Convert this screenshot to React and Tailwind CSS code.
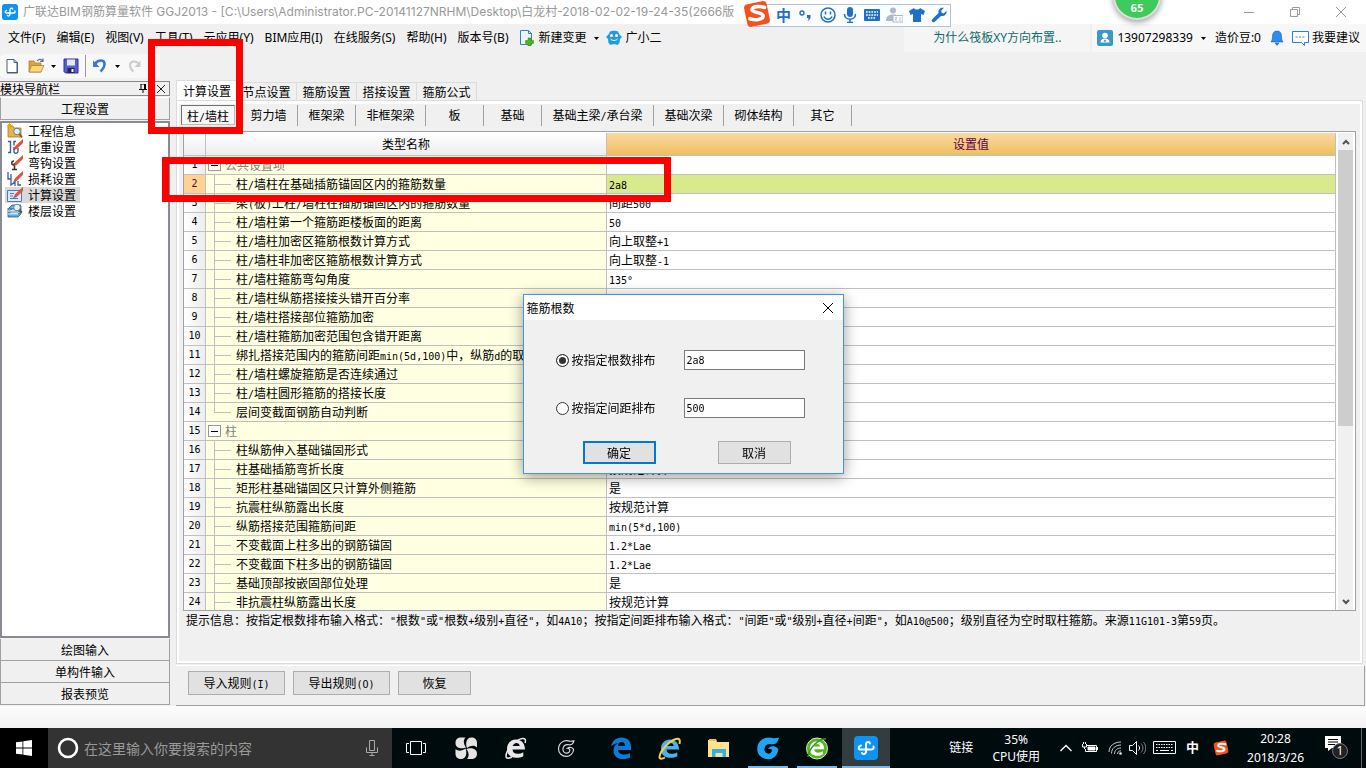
import React, { useState } from "react";

const menus = ["文件(F)", "编辑(E)", "视图(V)", "工具(T)", "云应用(Y)", "BIM应用(I)", "在线服务(S)", "帮助(H)", "版本号(B)"];

const subTabs = [
  ["剪力墙", "w-[58px]"],
  ["框架梁", "w-[58px]"],
  ["非框架梁", "w-[70px]"],
  ["板", "w-[58px]"],
  ["基础", "w-[58px]"],
  ["基础主梁/承台梁", "w-[112px]"],
  ["基础次梁", "w-[70px]"],
  ["砌体结构", "w-[70px]"],
  ["其它", "w-[58px]"],
];

const rows = [
  { group: true, name: "公共设置项", value: "" },
  { name: "柱/墙柱在基础插筋锚固区内的箍筋数量", value: "2a8", selected: true },
  { name: "梁(板)上柱/墙柱在插筋锚固区内的箍筋数量", value: "间距500" },
  { name: "柱/墙柱第一个箍筋距楼板面的距离", value: "50" },
  { name: "柱/墙柱加密区箍筋根数计算方式", value: "向上取整+1" },
  { name: "柱/墙柱非加密区箍筋根数计算方式", value: "向上取整-1" },
  { name: "柱/墙柱箍筋弯勾角度", value: "135°" },
  { name: "柱/墙柱纵筋搭接接头错开百分率", value: "" },
  { name: "柱/墙柱搭接部位箍筋加密", value: "" },
  { name: "柱/墙柱箍筋加密范围包含错开距离", value: "" },
  { name: "绑扎搭接范围内的箍筋间距min(5d,100)中，纵筋d的取", value: "" },
  { name: "柱/墙柱螺旋箍筋是否连续通过", value: "" },
  { name: "柱/墙柱圆形箍筋的搭接长度", value: "" },
  { name: "层间变截面钢筋自动判断", value: "", last: true },
  { group: true, name: "柱", value: "" },
  { name: "柱纵筋伸入基础锚固形式", value: "" },
  { name: "柱基础插筋弯折长度", value: "按规范计算" },
  { name: "矩形柱基础锚固区只计算外侧箍筋", value: "是" },
  { name: "抗震柱纵筋露出长度", value: "按规范计算" },
  { name: "纵筋搭接范围箍筋间距", value: "min(5*d,100)" },
  { name: "不变截面上柱多出的钢筋锚固", value: "1.2*Lae" },
  { name: "不变截面下柱多出的钢筋锚固", value: "1.2*Lae" },
  { name: "基础顶部按嵌固部位处理", value: "是" },
  { name: "非抗震柱纵筋露出长度", value: "按规范计算" },
];

/* Sets Latin runs in a half-width face, so that two letters take the room of one ideograph. */
function Mix({ children }) {
  return String(children)
    .split(/([\x20-\x7e°]+)/)
    .filter(Boolean)
    .map((part, i) =>
      /^[\x20-\x7e°]/.test(part) ? (
        <span key={i} className="whitespace-pre font-['DejaVu_Sans_Mono',monospace] text-[10px] leading-none">{part}</span>
      ) : (
        part
      )
    );
}

function Caret() {
  return (
    <svg className="h-[3px] w-[5px] shrink-0" viewBox="0 0 5 3"><path d="M0 0h5L2.500 3z" fill="#000" /></svg>
  );
}

function LogoShape() {
  return (
    <g>
      <rect width="24" height="24" rx="4" fill="#0c93f4" />
      <path d="M16 7.500C15.500 5.500 12 5.500 12 8.500V15.500C12 18.500 8.500 18.500 8 17M7 9.500C4 10.500 4 13.500 7 13.500H17.500C19.500 13.500 20 12 19.500 10.500" fill="none" stroke="#fff" strokeWidth="2" strokeLinecap="round" />
    </g>
  );
}

function SogouLogo({ className }) {
  return (
    <svg className={className} viewBox="0 0 28 28">
      <rect x="2.500" y="2.500" width="23" height="23" rx="4" fill="#f4511e" transform="rotate(-12 14 14)" />
      <path d="M21.500 7.500c-5-1.800-12-1.200-12.500 2-.4 3.500 11.500 2.500 11.200 6.600-.3 3.700-8 4.400-13.200 2.600" fill="none" stroke="#fff" strokeWidth="3.600" strokeLinecap="round" />
    </svg>
  );
}

function TitleBar() {
  return (
    <header className="flex h-6 shrink-0 items-center bg-white pl-[2px]">
      <svg className="h-4 w-4 shrink-0" viewBox="0 0 24 24"><LogoShape /></svg>
      <h1 className="ml-[5px] flex-1 overflow-hidden whitespace-nowrap font-[Inter,'Noto_Sans_CJK_SC',sans-serif] text-[12px] leading-6 text-[#999]">
        广联达BIM钢筋算量软件 GGJ2013 - [C:\Users\Administrator.PC-20141127NRHM\Desktop\白龙村-2018-02-02-19-24-35(2666版
      </h1>
      <button aria-label="最小化" className="flex h-5 w-[46px] items-center justify-center">
        <svg className="h-3 w-3" viewBox="0 0 12 12"><path d="M1 6.500h10" stroke="#999" /></svg>
      </button>
      <button aria-label="还原" className="flex h-5 w-[46px] items-center justify-center">
        <svg className="h-3 w-3" viewBox="0 0 12 12" fill="none" stroke="#999"><path d="M1.500 3.500h7v7h-7zM3.500 3.500v-2h7v7h-2" /></svg>
      </button>
      <button aria-label="关闭" className="mr-[2px] flex h-5 w-[46px] items-center justify-center">
        <svg className="h-3 w-3" viewBox="0 0 12 12"><path d="M1 1l10 10M11 1L1 11" stroke="#999" /></svg>
      </button>
    </header>
  );
}

function MenuBar() {
  return (
    <nav className="flex h-7 shrink-0 items-center whitespace-nowrap pl-2 font-['Noto_Sans','Noto_Sans_CJK_SC',sans-serif] text-[12px] leading-5">
      <div className="flex gap-[11px]">
        {menus.map((m) => <button key={m}>{m}</button>)}
      </div>
      <button className="ml-[10px] flex items-center gap-1">
        <svg className="h-4 w-4" viewBox="0 0 16 16">
          <path d="M1.500.5h8l3 3v11h-11z" fill="#eaf5fd" stroke="#3a7fb5" />
          <path d="M9.500.5v3h3" fill="none" stroke="#3a7fb5" />
          <path d="M9 8h3v2.500h2.500v3H12V16H9v-2.500H6.500v-3H9z" fill="#4cb515" stroke="#2f8a0c" strokeWidth=".5" />
        </svg>
        新建变更
      </button>
      <button aria-label="更多变更" className="ml-[7px] flex h-5 w-2 items-center"><Caret /></button>
      <button className="ml-1 flex items-center gap-1">
        <svg className="h-4 w-4" viewBox="0 0 16 16">
          <path d="M4 1.500c2-1 6-1 8 0l1.500 3 2.500 2.500-2 2-.5 4-2 2-2-.8h-3l-2 .8-2-2L2 9 0 7l2.500-2.500z" fill="#1f9be0" />
          <circle cx="5.500" cy="5.500" r="1.500" fill="#fff" /><circle cx="10.500" cy="5.500" r="1.500" fill="#fff" />
          <path d="M4.500 9c2 2 5 2 7 0" fill="none" stroke="#fff" />
        </svg>
        广小二
      </button>
      <div className="flex-1" />
      <a href="#help" className="flex h-full w-[186px] items-center justify-center bg-[#f5f5f5] text-[#0d6b6b]">为什么筏板XY方向布置..</a>
      <div className="ml-[2px] flex h-full items-center bg-[#f7f7f7] pl-[5px] pr-[6px]">
        <svg className="h-4 w-4" viewBox="0 0 16 16">
          <rect width="16" height="16" rx="2" fill="#3f97c6" />
          <circle cx="8" cy="5.500" r="2.800" fill="#fff" /><path d="M3.500 12.500c0-3 2-4 4.500-4s4.500 1 4.500 4z" fill="#fff" /><path d="M8 9.500l-1.500 1.500L8 12l1.500-1z" fill="#3f97c6" />
        </svg>
        <button className="ml-1 flex items-center gap-2">13907298339<Caret /></button>
        <span className="ml-[9px]">造价豆:0</span>
        <svg className="ml-[9px] h-4 w-[14px]" viewBox="0 0 14 16"><path d="M7 1c3 0 4.500 2 4.500 5 0 3 .5 4.500 1.500 6H1c1-1.500 1.500-3 1.500-6C2.500 3 4 1 7 1zM5 13h4l-2 2.500z" fill="#2b8cf5" stroke="#174e8f" strokeWidth=".5" /></svg>
        <button className="ml-2 flex items-center gap-[3px]">
          <svg className="h-4 w-[17px]" viewBox="0 0 17 16"><path d="M.5 1.500h16v11h-4v3l-3-3h-9z" fill="#fff" stroke="#2b7fd8" /><path d="M3.500 7h10" stroke="#2b7fd8" strokeDasharray="2 1.500" /></svg>
          我要建议
        </button>
      </div>
    </nav>
  );
}

function Toolbar() {
  return (
    <div className="flex h-7 shrink-0 items-center">
      <div className="flex h-6 w-[160px] items-center rounded-sm bg-[#f8f8f8] pl-1">
        <button aria-label="新建" className="w-4">
          <svg className="h-4 w-4" viewBox="0 0 16 16"><path d="M3 1.500h7l3 3v10H3z" fill="#fff" stroke="#4a5f78" /><path d="M10 1.500v3h3M13.500 4v11H3" fill="none" stroke="#4a5f78" /></svg>
        </button>
        <button aria-label="打开" className="ml-2 w-[17px]">
          <svg className="h-4 w-[17px]" viewBox="0 0 17 16"><path d="M1 3h5l1 2h6v9H1z" fill="#dba53c" stroke="#a87820" strokeWidth=".7" /><path d="M3.500 7.500H16L13 14H1z" fill="#fbd77f" stroke="#a87820" strokeWidth=".7" /><path d="M9 3c2-2.500 4-2 6 0m0-2.500V3.500h-3" fill="none" stroke="#55748f" strokeWidth="1.200" /></svg>
        </button>
        <button aria-label="打开列表" className="ml-[6px] w-2"><Caret /></button>
        <button aria-label="保存" className="ml-1 w-4">
          <svg className="h-4 w-4" viewBox="0 0 16 16"><path d="M1 1h14v14H2.500L1 13.500z" fill="#5560d0" stroke="#33338c" /><path d="M4 1.500h8v6H4z" fill="#e6e8fa" /><path d="M4.500 10h7v5h-7z" fill="#25255c" /><path d="M8.500 11h2v3h-2z" fill="#fff" /></svg>
        </button>
        <span className="ml-[6px] h-[22px] w-px bg-[#999]" />
        <button aria-label="撤销" className="ml-[6px] w-4">
          <svg className="h-4 w-4" viewBox="0 0 16 16"><path d="M3 6C6 1.500 12 1.500 12.500 5.500c.3 3-1.500 5.500-4 8" fill="none" stroke="#3b78cf" strokeWidth="2.600" /><path d="M1 2.500v6.500h6.500z" fill="#3b78cf" /></svg>
        </button>
        <button aria-label="撤销列表" className="ml-[7px] w-2"><Caret /></button>
        <button aria-label="恢复" className="ml-1 w-4">
          <svg className="h-4 w-4" viewBox="0 0 16 16"><path d="M12 6C9 2 3 3 3 7c0 2.500 1 4.500 3.500 6.500" fill="none" stroke="#ccc" strokeWidth="2" /><path d="M13.500 2.500v6.500H7.500z" fill="#ccc" /></svg>
        </button>
      </div>
    </div>
  );
}

const pencil = <path d="M15.800.5L8.500 7l-2 4L10 9.500 16 3.500z" fill="#e8503a" stroke="#b02b15" strokeWidth=".4" />;
const navIcons = {
  info: <g><path d="M1 3h5l1 2h7v9H1z" fill="#e5b548" stroke="#a87c1e" strokeWidth=".8" /><circle cx="10" cy="8.500" r="3.300" fill="#dff0fb" stroke="#5b7d99" /><path d="M12.500 11l2.500 3.500" stroke="#8a5c20" strokeWidth="2" /><path d="M2.500 0v5M0 2.500h5M.8.8l3.400 3.400M4.200.8L.8 4.200" stroke="#f5a400" /></g>,
  weight: <g><path d="M1 2.500h2.500v11H1M9 2.500H7v4M7 8v4.500c0 2.500 4 2 4 0V9" fill="none" stroke="#3b5e95" strokeWidth="1.400" />{pencil}</g>,
  hook: <g><path d="M7.500 8v6.500M5 14.500h5M7 10c-3 0-3-4 0-4" fill="none" stroke="#333" strokeWidth="1.500" />{pencil}</g>,
  loss: <g><path d="M1 1v7h3V3M4 8v6l4-3v4M11 10v4h3" fill="none" stroke="#3b5e95" strokeWidth="1.300" />{pencil}</g>,
  calc: <g><path d="M.5 3.500h14v11H.5z" fill="#d9e8fa" stroke="#4d7cb5" /><path d="M3 6.500h4M3 9h3M3 11.500h8" stroke="#4d7cb5" />{pencil}</g>,
  floor: <g><path d="M2 5l3-3h9l-3 3zM2 8l3-2h9l-3 2zM1 11l3-2h10l-3 2zM1 5v9h10l3-3V3" fill="#5fa9dd" stroke="#1d5d94" strokeWidth=".8" /><path d="M1 8h10M1 11h10" stroke="#fff" /><circle cx="10" cy="4.500" r="3.300" fill="#e6f3fb" stroke="#6a8499" /><path d="M12.500 7l2.500 2.500" stroke="#6a4c20" strokeWidth="1.600" /></g>,
};
const navItems = [["info", "工程信息"], ["weight", "比重设置"], ["hook", "弯钩设置"], ["loss", "损耗设置"], ["calc", "计算设置"], ["floor", "楼层设置"]];

function Sidebar() {
  return (
    <aside className="mb-[1px] mr-[6px] mt-[1px] flex w-[170px] shrink-0 flex-col">
      <div className="flex h-[15px] shrink-0 items-center border border-l-0 border-[#888] pr-1 leading-[12px]">
        <span className="flex-1">模块导航栏</span>
        <button aria-label="固定" className="mr-[10px]">
          <svg className="h-[9px] w-2" viewBox="0 0 8 9"><path d="M1.500 0h5v5.500M2 0v5.500M0 5.500h8M4 5.500V9M5.500 0v5" fill="none" stroke="#000" /></svg>
        </button>
        <button aria-label="关闭导航栏"><svg className="h-2 w-2" viewBox="0 0 8 8"><path d="M0 0l8 8M8 0L0 8" stroke="#222" /></svg></button>
      </div>
      <button className="mt-[1px] h-[23px] shrink-0 border border-[#a0a0a0] border-t-white leading-5">工程设置</button>
      <ul className="my-[1px] flex-1 border-2 border-[#8a8a92] bg-white pl-[3px]">
        {navItems.map(([icon, label]) => (
          <li key={icon}>
            <button className={"flex h-4 items-center pr-1 leading-4 " + (icon === "calc" ? "bg-[#d9d9d9]" : "")}>
              <svg className="mr-[5px] ml-[2px] h-4 w-4" viewBox="0 0 16 16">{navIcons[icon]}</svg>
              {label}
            </button>
          </li>
        ))}
      </ul>
      {["绘图输入", "单构件输入", "报表预览"].map((t) => (
        <button key={t} className="h-[22px] shrink-0 border border-t-0 border-[#a0a0a0] leading-5">{t}</button>
      ))}
    </aside>
  );
}

function NameCell({ row }) {
  if (row.group) {
    return (
      <div className="flex h-[18px] items-center gap-1 overflow-hidden pl-[2px] text-[#808080]">
        <button aria-label="折叠" className="flex h-3 w-[13px] items-center justify-center border border-[#999] bg-white"><span className="h-px w-[7px] bg-black" /></button>
        <span className="leading-[18px]">{row.name}</span>
      </div>
    );
  }
  return (
    <div className="flex h-[18px] overflow-hidden pl-2">
      <span className="mr-[5px] flex w-[17px] shrink-0 flex-col">
        <span className="h-[10px] border-b border-l border-[#c0c0c0]" />
        <span className={"flex-1 border-l " + (row.last ? "border-transparent" : "border-[#c0c0c0]")} />
      </span>
      <span className="whitespace-nowrap leading-[18px]"><Mix>{row.name}</Mix></span>
    </div>
  );
}

function SettingsTable() {
  return (
    <div className="flex min-h-0 flex-1 overflow-hidden border border-[#a0a0a8] bg-white pt-px">
      <div className="min-w-0 flex-1 overflow-hidden">
        <table className="w-full table-fixed border-separate border-spacing-0">
          <colgroup><col className="w-[22px]" /><col className="w-[401px]" /><col /></colgroup>
          <thead>
            <tr className="h-[23px]">
              <th className="border-b border-r border-[#c0c0c0] bg-linear-to-b from-white to-[#ededed] p-0" />
              <th className="border-b border-r border-[#c0c0c0] bg-linear-to-b from-white to-[#ededed] p-0 font-normal leading-[22px]">类型名称</th>
              <th className="border-b border-r border-[#c0c0c0] bg-linear-to-b from-[#fad9a0] to-[#f0be5c] p-0 font-normal leading-[22px] text-[#5a0050]">设置值</th>
            </tr>
          </thead>
          <tbody>
            {rows.map((row, i) => (
              <tr key={i}>
                <td className={"border-b border-r border-[#c0c0c0] p-0 text-center " + (row.selected ? "bg-[#ffd290] text-[#5a0050]" : "bg-linear-to-r from-white to-[#ededed]")}>
                  <div className="h-[18px] overflow-hidden font-['DejaVu_Sans_Mono',monospace] text-[10px] leading-[18px]">{i + 1}</div>
                </td>
                <td className="border-b border-r border-[#c0c0c0] bg-[#ffffe1] p-0"><NameCell row={row} /></td>
                <td className={"border-b border-r border-[#c0c0c0] p-0 pl-[2px] " + (row.selected ? "bg-[#d9ea8c]" : "")}>
                  <div className="h-[18px] overflow-hidden whitespace-nowrap leading-[18px]"><Mix>{row.value}</Mix></div>
                </td>
              </tr>
            ))}
          </tbody>
        </table>
      </div>
      <div className="ml-[2px] mr-[2px] flex w-[15px] shrink-0 flex-col bg-[#f0f0f0]">
        <button aria-label="向上滚动" className="flex h-[17px] items-center justify-center"><svg className="h-[6px] w-2" viewBox="0 0 8 6"><path d="M1 5l3-3 3 3" fill="none" stroke="#505050" strokeWidth="2" /></svg></button>
        <div className="h-[276px] bg-[#cdcdcd]" />
        <div className="flex-1" />
        <button aria-label="向下滚动" className="flex h-[17px] items-center justify-center"><svg className="h-[6px] w-2" viewBox="0 0 8 6"><path d="M1 1l3 3 3-3" fill="none" stroke="#505050" strokeWidth="2" /></svg></button>
      </div>
    </div>
  );
}

function Main() {
  return (
    <main className="flex min-w-0 flex-1 flex-col">
      <div className="flex h-5 shrink-0 items-end">
        <button className="h-5 w-[61px] border-l border-t border-[#dcdcdc] bg-white leading-[18px]">计算设置</button>
        {["节点设置", "箍筋设置", "搭接设置", "箍筋公式"].map((t) => (
          <button key={t} className="h-[18px] w-[60px] border-r border-t border-[#dcdcdc] leading-[17px]">{t}</button>
        ))}
      </div>
      <section className="mr-[3px] flex min-h-0 flex-1 flex-col border border-[#dcdcdc]">
        <div className="flex min-h-0 flex-1 flex-col border-2 border-t-[3px] border-white pr-1">
          <div className="flex h-[22px] shrink-0 items-center pl-[2px]">
            <button className="h-5 w-[54px] border border-[#bbb] border-l-[#707070] border-t-[#707070] bg-[#f7f7f7] leading-[17px]"><Mix>柱/墙柱</Mix></button>
            <span className="w-[5px]" />
            {subTabs.map(([t, w]) => (
              <button key={t} className={"h-[21px] border-r border-[#a0a0a0] leading-[18px] " + w}><Mix>{t}</Mix></button>
            ))}
          </div>
          <div className="mt-[5px] flex min-h-0 flex-1 flex-col pl-[4px]"><SettingsTable /></div>
          <p className="h-[50px] shrink-0 overflow-hidden whitespace-nowrap pl-[7px] leading-[18px]">
            <Mix>提示信息：按指定根数排布输入格式："根数"或"根数+级别+直径"，如4A10；按指定间距排布输入格式："间距"或"级别+直径+间距"，如A10@500；级别直径为空时取柱箍筋。来源11G101-3第59页。</Mix>
          </p>
        </div>
      </section>
      <footer className="mr-[1px] mt-[1px] flex h-[41px] shrink-0 gap-2 border-b border-r border-t border-[#a0a0a0] border-t-white pl-3 pt-[5px]">
        <button className="h-6 w-[97px] border border-[#adadad] bg-[#e1e1e1] leading-[22px]"><Mix>导入规则(I)</Mix></button>
        <button className="h-6 w-[97px] border border-[#adadad] bg-[#e1e1e1] leading-[22px]"><Mix>导出规则(O)</Mix></button>
        <button className="h-6 w-[73px] border border-[#adadad] bg-[#e1e1e1] leading-[22px]">恢复</button>
      </footer>
    </main>
  );
}

function Dialog() {
  const [mode, setMode] = useState("count");
  const radio = "mr-[3px] h-[13px] w-[13px] appearance-none rounded-full border border-[#333] bg-white checked:bg-[#333] checked:shadow-[inset_0_0_0_2px_#fff]";
  const field = "ml-auto h-5 w-[121px] border border-[#7a7a7a] bg-white pl-[2px] font-['DejaVu_Sans_Mono',monospace] text-[10px] outline-none";
  return (
    <div className="fixed inset-0 flex items-center justify-center">
      <div role="dialog" aria-label="箍筋根数" className="w-[321px] border border-[#3f96e8] bg-[#f0f0f0] pb-[9px] shadow-[0_3px_14px_rgba(0,0,0,0.4)]">
        <div className="flex h-[25px] items-center bg-white pl-[3px] pr-[9px]">
          <h2 className="flex-1 leading-6">箍筋根数</h2>
          <button aria-label="关闭对话框"><svg className="h-3 w-3" viewBox="0 0 12 12"><path d="M1 1l10 10M11 1L1 11" stroke="#000" /></svg></button>
        </div>
        <div className="flex flex-col gap-7 pl-8 pr-[38px] pt-[30px]">
          <div className="flex h-5 items-center">
            <input id="byCount" type="radio" name="mode" className={radio} checked={mode === "count"} onChange={() => setMode("count")} />
            <label htmlFor="byCount">按指定根数排布</label>
            <input aria-label="根数" className={field} defaultValue="2a8" />
          </div>
          <div className="flex h-5 items-center">
            <input id="bySpacing" type="radio" name="mode" className={radio} checked={mode === "spacing"} onChange={() => setMode("spacing")} />
            <label htmlFor="bySpacing">按指定间距排布</label>
            <input aria-label="间距" className={field} defaultValue="500" />
          </div>
        </div>
        <div className="mt-[23px] flex justify-between pl-[59px] pr-[52px]">
          <button className="h-[23px] w-[73px] border-2 border-[#0078d7] bg-[#e1e1e1] leading-[18px]">确定</button>
          <button className="h-[23px] w-[73px] border border-[#adadad] bg-[#e1e1e1] leading-5">取消</button>
        </div>
      </div>
    </div>
  );
}

function ImeBar() {
  return (
    <div className="absolute left-[743px] top-0 flex h-7 w-[207px] items-center">
      <div className="ml-3 mt-[2px] flex h-[23px] flex-1 items-center gap-[6px] border border-[#b4c4d8] bg-[#fbfdff] pl-[20px] pr-[3px] text-[#1f6fc9]">
        <span className="w-4 text-[15px] font-bold leading-[20px]">中</span>
        <svg className="h-4 w-4" viewBox="0 0 16 16"><circle cx="4" cy="6" r="2" fill="none" stroke="#1f6fc9" strokeWidth="1.400" /><path d="M9 8h3.500c.5 3-.5 5-3 6 1-1.500 1-2.500 1-3H9z" fill="#1f6fc9" /></svg>
        <svg className="h-4 w-4" viewBox="0 0 16 16"><circle cx="8" cy="8" r="7" fill="none" stroke="#1f6fc9" strokeWidth="1.500" /><path d="M5.500 4.500v3M10.500 4.500v3M4 9.500c1.500 3.500 6.500 3.500 8 0" fill="none" stroke="#1f6fc9" strokeWidth="1.500" /></svg>
        <svg className="h-4 w-4" viewBox="0 0 16 16"><rect x="5" y="0" width="6" height="10" rx="3" fill="#1f6fc9" /><path d="M2.500 7c0 7 11 7 11 0M8 12v3.500M5 15.500h6" fill="none" stroke="#1f6fc9" strokeWidth="1.500" /></svg>
        <svg className="h-4 w-4" viewBox="0 0 16 16"><rect y="2" width="16" height="12" rx="1" fill="#1f6fc9" /><path d="M2 5h12M2 8h12M4 11h8" stroke="#fff" strokeWidth="1.300" strokeDasharray="1.700 1" /></svg>
        <svg className="h-4 w-[17px]" viewBox="0 0 17 16"><circle cx="7" cy="3.500" r="3" fill="#a9b9cf" /><path d="M0 14c0-5 3-6.500 7-6.500h3V14z" fill="#a9b9cf" /><rect x="7" y="8.500" width="10" height="6.500" fill="#fff" stroke="#a9b9cf" /><path d="M9 10.500h2l-2 2.500h2M13 11h2.500M13 13h2.500" fill="none" stroke="#a9b9cf" strokeWidth=".8" /></svg>
        <svg className="h-4 w-4" viewBox="0 0 16 16"><path d="M5 1c1 2 5 2 6 0l5 3-1.500 4-2.500-1v8H4V7L1.500 8 0 4z" fill="#1f6fc9" /></svg>
        <svg className="h-4 w-4" viewBox="0 0 16 16"><path d="M15.500 4l-3 2.500-2-1-.2-2L13 .8C10 0 7 2 7.500 6L1 12.500c-1 1.500 1 3.500 2.500 2.500L10 9c3.500.5 6-2 5.500-5z" fill="#1f6fc9" /></svg>
      </div>
      <SogouLogo className="absolute left-0 top-0 h-7 w-7" />
    </div>
  );
}

function TaskApp({ label, bar, active, children }) {
  return (
    <button aria-label={label} className={"flex h-10 w-12 flex-col items-center " + (active ? "bg-[#333d40]" : "")}>
      <span className="flex flex-1 items-center pt-px"><svg className="h-6 w-6" viewBox="0 0 24 24">{children}</svg></span>
      <span className={"h-[2px] " + (active ? "w-full " : "w-10 ") + (bar ? "bg-[#76b9ed]" : "")} />
    </button>
  );
}

const eShape = "M3 13C3 7 7 3.500 12 3.500S21 7 21 13.500H8.500c.3 3 2 4.300 4.800 4.300 2.500 0 4.200-.6 6-1.600v4c-2 1-4.300 1.600-7 1.600C6.500 21.800 3 18.500 3 13zm5.500-3h7.200c-.2-2-1.500-3-3.500-3s-3.400 1-3.700 3z";
const gShape = "M22 2.500c-2 0-3.500.8-5.500.3C9 .5 2 5 2 13c0 5.500 4.500 9.500 10 9.500 5 0 9.500-4 9.500-9-1.500-2.500-5-3.500-8-1.500 2.500.2 3.500 1.500 3 3.500-.5 2.200-2.500 3.200-4.700 2.800-3-.5-4.600-3-4-6 .8-4 4.500-5.300 7.700-4.800C18.500 8 21 6 22 2.500z";

function Taskbar() {
  return (
    <footer className="flex h-10 shrink-0 items-center bg-[#000b0e] font-['Noto_Sans','Noto_Sans_CJK_SC',sans-serif] text-[12px] text-white">
      <button aria-label="开始" className="flex h-10 w-12 items-center justify-center bg-black">
        <svg className="h-4 w-4" viewBox="0 0 16 16"><path d="M0 2.300l6.500-.9v6.100H0zM7.300 1.300L16 0v7.500H7.300zM0 8.400h6.500v6.200L0 13.700zM7.300 8.400H16V16l-8.700-1.200z" fill="#fff" /></svg>
      </button>
      <label className="flex h-10 w-[344px] items-center bg-[#333] pl-[9px] pr-[14px]">
        <svg className="h-[22px] w-[22px]" viewBox="0 0 22 22"><circle cx="11" cy="11" r="9" fill="none" stroke="#fff" strokeWidth="2.600" /></svg>
        <input aria-label="搜索" placeholder="在这里输入你要搜索的内容" className="ml-[5px] min-w-0 flex-1 bg-transparent text-[14px] outline-none placeholder:text-[#999]" />
        <svg className="h-4 w-3" viewBox="0 0 12 16" fill="none" stroke="#aaa"><path d="M3.500.5h5v10h-5zM.5 7.500v5h11v-5M6 12.500v3M3.500 15.500h5" /></svg>
      </label>
      <div className="flex gap-[2px]">
        <TaskApp label="任务视图"><path d="M6.500 5.500h11v13h-11zM5 7.500H2.500v9H5M19 7.500h2.500v9H19" fill="none" stroke="#fff" /></TaskApp>
        <TaskApp label="风车">
          <g fill="#e4e4e4">
            <path d="M1.500 7C1.500 3 4 1.500 7 1.500h4.500C9 4 9.500 8 12 11.500 9 13 1.500 13 1.500 7z" />
            <path d="M17.500 1.500c4 0 5.500 2.500 5.500 5.500v4.500C20.500 9 16.500 9.500 13 12c-1.500-3-1.500-10.500 4.500-10.500z" />
            <path d="M23 17.500c0 4-2.500 5.500-5.500 5.500H13c2.500-2.500 2-6.500-.5-10 3-1.500 10.500-1.500 10.500 4.500z" />
            <path d="M7 23c-4 0-5.500-2.500-5.500-5.500V13c2.500 2.500 6.500 2 10-.5C13 15.500 13 23 7 23z" />
          </g>
        </TaskApp>
        <TaskApp label="浏览器"><path d={eShape} fill="#e8e8e8" /><path d="M21 7c1-3 .5-5-3-4.500C11 4 2 14 2 20c0 3 3 2.500 6 1" fill="none" stroke="#e8e8e8" strokeWidth="1.500" /></TaskApp>
        <TaskApp label="广联达助手"><g transform="translate(3 3) scale(.77)"><path d={gShape} fill="none" stroke="#ddd" strokeWidth="1.500" /></g></TaskApp>
      </div>
      <div className="ml-[7px] flex gap-px">
        <TaskApp label="Edge"><path d="M2 11C3 5 7 1.500 12.500 1.500 18.500 1.500 22 5.500 22 11v3H9c.2 3 3 4.500 6 4.500 2.200 0 4.200-.6 6-1.600v4.600c-2 1-4.500 1.600-7 1.600-6 0-9.500-3.500-9.500-8.600 0-3.500 2-6.200 5-7.500-3.500.3-6 2-7.500 3zm7-1h7c0-2.500-1.200-4-3.500-4C10.500 6 9.200 7.500 9 10z" fill="#0c7ad9" /></TaskApp>
        <TaskApp label="Internet Explorer"><path d={eShape} fill="#4db1ef" /><path d="M21.500 8c1-4 0-6-3.500-5C11 5 2 15 1.500 21c0 2.500 3 2 5.500.5" fill="none" stroke="#fbd13a" strokeWidth="2" /></TaskApp>
        <TaskApp label="文件资源管理器"><path d="M1 4h8l1 2h12v15H1z" fill="#fce28c" /><path d="M2 3h7l1 2H2z" fill="#f5bf35" /><path d="M5 21v-8h14v8h-3.500v-4h-7v4z" fill="#34aee8" /></TaskApp>
        <TaskApp label="广联达" bar><path d={gShape} fill="#22a4f4" stroke="#22a4f4" strokeWidth="1.500" /></TaskApp>
        <TaskApp label="360浏览器" bar><circle cx="12" cy="12.500" r="10.500" fill="#54b51d" stroke="#d8f2c8" /><g transform="translate(2.400 2.400) scale(.8)"><path d={eShape} fill="#fff" /></g><path d="M21 3C14 2 4 12 3 21" fill="none" stroke="#3a9a10" strokeWidth="1.500" /></TaskApp>
        <TaskApp label="钢筋算量" bar active><LogoShape /></TaskApp>
      </div>
      <div className="flex-1" />
      <span>链接</span>
      <span className="ml-[19px] flex flex-col text-center leading-[17px]"><span>35%</span><span>CPU使用</span></span>
      <svg className="ml-5 h-2 w-3" viewBox="0 0 12 8"><path d="M.5 7L6 1.500 11.500 7" fill="none" stroke="#fff" strokeWidth="1.300" /></svg>
      <svg className="ml-[10px] h-4 w-4" viewBox="0 0 16 16" fill="none" stroke="#fff"><path d="M5 5.500h9.500v6H3.500V9M15.500 7v3M.5 4v3h4V4M1.500 2v2M3.500 2v2M2.500 7v2" /><path d="M6 7h7v3H6z" fill="#fff" /></svg>
      <svg className="ml-[10px] h-4 w-[14px]" viewBox="0 0 14 16" fill="none" stroke="#ccc"><path d="M1 12C1 6 6 2 13 2M3.500 13.500C3.500 8 8 5 13 5M6.500 14c0-4 3-6 6.500-6M9.500 14c0-2 1.500-3.200 3.500-3.200" /><circle cx="12.500" cy="13.500" r="1" fill="#fff" /></svg>
      <svg className="ml-[7px] h-4 w-[17px]" viewBox="0 0 17 16" fill="none" stroke="#fff"><path d="M.5 5.500h3l4-4v13l-4-4h-3zM9.500 5.500c1.500 1.500 1.500 3.500 0 5" /><path d="M12 3.500c2.500 2.500 2.500 6.500 0 9M14.500 2c3 3.500 3 8.500 0 12" stroke="#888" /></svg>
      <svg className="ml-[7px] h-[14px] w-[23px]" viewBox="0 0 23 14" fill="none" stroke="#fff"><path d="M.5.5h22v12H.5z" /><path d="M3 3.500h17M3 6.500h17" strokeDasharray="1.500 1" /><path d="M3 9.500h2M7 9.500h9M18 9.500h2" /></svg>
      <span className="ml-[10px] text-[13px] font-bold">中</span>
      <SogouLogo className="ml-[14px] h-4 w-4" />
      <span className="ml-[18px] flex flex-col text-center leading-[19px]"><span>20:28</span><span>2018/3/26</span></span>
      <div className="relative ml-[21px] mr-3 h-6 w-6">
        <svg className="h-4 w-4" viewBox="0 0 16 16"><path d="M0 0h16v12H7l-4 3v-3H0z" fill="#fff" /><path d="M3 3.500h10M3 6h10M3 8.500h7" stroke="#000" /></svg>
        <span className="absolute left-[7px] top-[7px] flex h-4 w-4 items-center justify-center rounded-full border border-[#777] bg-[#222] text-[12px] leading-4">1</span>
      </div>
      <span className="mr-[4px] h-10 w-px bg-[#666]" />
    </footer>
  );
}

export default function App() {
  return (
    <div className="relative flex h-screen flex-col overflow-hidden bg-[#f0f0f0] font-['Noto_Sans_CJK_SC',sans-serif] text-[12px] text-black">
      <TitleBar />
      <MenuBar />
      <Toolbar />
      <div className="flex min-h-0 flex-1">
        <Sidebar />
        <Main />
      </div>
      <div className="h-[22px] shrink-0 bg-linear-to-b from-[#fcfcfc] to-[#f3f3f3]" />
      <Taskbar />
      <ImeBar />
      <div className="absolute -top-7 right-[205px] flex h-12 w-12 items-end justify-center rounded-full border-2 border-[#ddd] bg-[#3ecb5c] pb-[3px] text-[11px] font-bold leading-4 text-white shadow-[0_2px_6px_rgba(0,0,0,0.4)]">65</div>
      <Dialog />
      <div className="pointer-events-none absolute left-[148px] top-[39px] h-[95px] w-[95px] border-[7px] border-[#fe0000]" />
      <div className="pointer-events-none absolute left-[162px] top-[157px] h-[45px] w-[509px] border-[7px] border-[#fe0000]" />
    </div>
  );
}
